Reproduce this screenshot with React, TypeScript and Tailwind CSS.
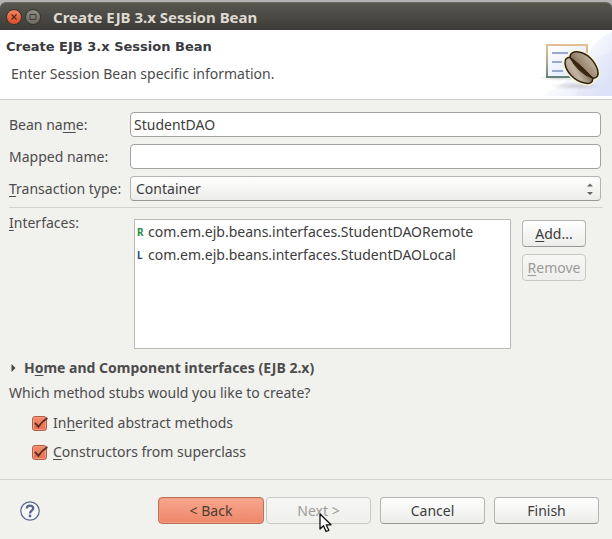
import type { ReactNode } from "react";

interface DialogButtonProps {
  children: ReactNode;
  disabled?: boolean;
  primary?: boolean;
  className?: string;
}

function DialogButton({ children, disabled, primary, className = "" }: DialogButtonProps) {
  const look = primary
    ? "border-[#b9705a] bg-linear-to-b from-[#f7a68e] to-[#ee8768] text-[#4a3b36] shadow-[inset_0_0_0_1px_#f19b81]"
    : disabled
    ? "border-[#c9c8c4] bg-linear-to-b from-[#f6f6f5] to-[#efefed] text-[#9c9b98]"
    : "border-[#b5b4b0] border-b-[#989793] bg-linear-to-b from-white to-[#ececea] text-[#3c3c3c]";

  return (
    <button
      type="button"
      disabled={disabled}
      className={`h-[27px] rounded border leading-5 whitespace-nowrap ${look} ${className}`}
    >
      {children}
    </button>
  );
}

interface StubCheckboxProps {
  id: string;
  children: ReactNode;
}

function StubCheckbox({ id, children }: StubCheckboxProps) {
  return (
    <div className="flex h-5 items-center">
      <span className="relative mr-[6px] h-[15px] w-[15px]">
        <input
          id={id}
          type="checkbox"
          defaultChecked
          className="peer block h-[15px] w-[15px] appearance-none rounded-[3px] border border-[#b35c43] bg-linear-to-b from-[#f28b6d] to-[#e86f4d] shadow-[inset_0_0_0_1px_#f49d84]"
        />
        <svg
          viewBox="0 0 17 15"
          className="pointer-events-none absolute top-0 left-0 hidden h-[15px] w-[17px] peer-checked:block"
        >
          <path d="M3 6.8 6.4 10.8Q9.4 5.8 15.4 2" fill="none" stroke="#5c3026" strokeWidth="2" />
        </svg>
      </span>
      <label htmlFor={id}>{children}</label>
    </div>
  );
}

function BeanBanner() {
  return (
    <svg viewBox="0 0 76 66" className="h-[66px] w-[76px] shrink-0" aria-hidden="true">
      <defs>
        <linearGradient id="sky" x1="0.35" y1="0.35" x2="1" y2="0.8">
          <stop offset="0" stopColor="#ffffff" />
          <stop offset="1" stopColor="#e0e5f8" />
        </linearGradient>
        <linearGradient id="frame" x1="0" y1="0" x2="0" y2="1">
          <stop offset="0" stopColor="#e2c096" />
          <stop offset="0.6" stopColor="#aaa48a" />
          <stop offset="1" stopColor="#638177" />
        </linearGradient>
        <linearGradient id="sheet" x1="0" y1="0" x2="1" y2="1">
          <stop offset="0" stopColor="#ffffff" />
          <stop offset="1" stopColor="#dce6fa" />
        </linearGradient>
        <linearGradient id="upper" x1="0.1" y1="0.7" x2="0.8" y2="0.2">
          <stop offset="0" stopColor="#6a533c" />
          <stop offset="0.5" stopColor="#a08c75" />
          <stop offset="1" stopColor="#c3b5a2" />
        </linearGradient>
        <linearGradient id="lower" x1="0.1" y1="0.7" x2="0.8" y2="0.3">
          <stop offset="0" stopColor="#a99983" />
          <stop offset="0.4" stopColor="#c2b5a1" />
          <stop offset="1" stopColor="#6e5840" />
        </linearGradient>
        <radialGradient id="shade">
          <stop offset="0" stopColor="#8f8d98" stopOpacity="0.35" />
          <stop offset="1" stopColor="#8f8d98" stopOpacity="0" />
        </radialGradient>
      </defs>
      <path d="M76 2Q64 6 56 18Q38 52 4 66H76Z" fill="url(#sky)" />
      <path d="M76 22Q62 25 50 35L40 66H76Z" fill="#cbd2f0" opacity="0.15" />
      <ellipse cx="23" cy="48" rx="22" ry="3" fill="url(#shade)" />
      <ellipse cx="40" cy="56" rx="26" ry="4" fill="url(#shade)" />
      <rect x="11" y="15" width="40" height="32" fill="url(#sheet)" stroke="url(#frame)" strokeWidth="2" />
      <path d="M16 23H32M16 32H26M16 41H27" stroke="#98a8d0" strokeWidth="2" />
      <g transform="translate(24 16) scale(0.3333)" strokeLinejoin="round">
        <path
          d="M30 34C30 20 42 16 56 18C82 22 104 44 113 72C117 88 112 96 99 97C98 110 88 115 74 111C44 106 18 78 15 52C14 40 20 34 30 34Z"
          fill="#fbf5ce"
          stroke="#fbf5ce"
          strokeWidth="13"
        />
        <path
          d="M30 34C30 20 42 16 56 18C82 22 104 44 113 72C117 88 112 96 99 97C80 84 48 62 30 34Z"
          fill="url(#upper)"
          stroke="#2e2214"
          strokeWidth="4.5"
        />
        <path
          d="M30 34C20 34 14 40 15 52C18 78 44 106 74 111C88 115 98 110 99 97C80 84 48 62 30 34Z"
          fill="url(#lower)"
          stroke="#2e2214"
          strokeWidth="4.5"
        />
        <path d="M30 34Q60 54 99 97Q54 82 30 34Z" fill="#3b2512" stroke="#3b2512" strokeWidth="3" />
      </g>
    </svg>
  );
}

const interfaces = [
  { kind: "R", color: "text-[#268a45]", name: "com.em.ejb.beans.interfaces.StudentDAORemote" },
  { kind: "L", color: "text-[#234a7d]", name: "com.em.ejb.beans.interfaces.StudentDAOLocal" },
];

const field = "h-[25px] w-full rounded border border-[#a3a29e] bg-white px-[3px] text-[#3c3c3c] outline-none";

export default function App() {
  return (
    <div className="flex min-h-screen flex-col bg-[#b3b3b1] pt-[2px] font-['Noto_Sans',sans-serif] text-sm leading-5 text-[#4c4c4c]">
      <header className="flex h-7 items-center rounded-t-md border-t border-[#6b6a63] bg-linear-to-b from-[#57564f] to-[#3d3c38] pl-[6px]">
        <button
          type="button"
          aria-label="Close"
          className="flex h-4 w-4 items-center justify-center rounded-full border border-[#33322e] bg-linear-to-b from-[#f2805d] to-[#dc4e28]"
        >
          <svg viewBox="0 0 8 8" className="h-2 w-2">
            <path d="M1.5 1.5 6.5 6.5M6.5 1.5 1.5 6.5" stroke="#51271a" strokeWidth="1.2" />
          </svg>
        </button>
        <button
          type="button"
          aria-label="Maximize"
          className="ml-[3px] flex h-4 w-4 items-center justify-center rounded-full border border-[#33322e] bg-linear-to-b from-[#908e83] to-[#6d6b62]"
        >
          <svg viewBox="0 0 8 8" className="h-2 w-2">
            <path d="M1 1.5H7V6.5H1Z" fill="none" stroke="#3d3c36" />
          </svg>
        </button>
        <span className="ml-3 text-[15px] font-bold text-[#dfdbd2]">Create EJB 3.x Session Bean</span>
      </header>

      <section className="flex h-[70px] justify-between border-b border-[#d3d2ce] bg-white">
        <div className="pt-[7px] pl-[6px]">
          <h1 className="font-['DejaVu_Sans',sans-serif] text-[13px] font-bold text-[#3a3a3e]">
            Create EJB 3.x Session Bean
          </h1>
          <p className="mt-[7px] ml-[5px]">Enter Session Bean specific information.</p>
        </div>
        <BeanBanner />
      </section>

      <main className="flex-1 bg-[#f1f1ee] px-[9px] pt-3">
        <div className="grid grid-cols-[121px_1fr] items-center gap-y-[7px] pr-[2px]">
          <label htmlFor="bean-name">
            Bean na<u className="underline-offset-2">m</u>e:
          </label>
          <input id="bean-name" defaultValue="StudentDAO" className={field} />
          <label htmlFor="mapped-name">Mapped name:</label>
          <input id="mapped-name" className={field} />
          <label htmlFor="transaction-type" className="whitespace-nowrap">
            <u className="underline-offset-2">T</u>ransaction type:
          </label>
          <div className="relative">
            <select
              id="transaction-type"
              className="block h-[25px] w-full appearance-none rounded border border-[#b5b4b0] border-b-[#989793] bg-linear-to-b from-white to-[#ececea] px-[5px] text-[#3c3c3c] outline-none"
            >
              <option>Container</option>
              <option>Bean</option>
            </select>
            <svg viewBox="0 0 6 12" className="pointer-events-none absolute top-[7px] right-2 h-3 w-[6px]">
              <path d="M0 3.5 3 .5 6 3.5ZM0 9 3 12 6 9Z" fill="#656563" />
            </svg>
          </div>
        </div>

        <hr className="mt-[6px] border-[#d3d2ce]" />

        <div className="mt-[11px] flex pr-[17px]">
          <span id="interfaces-label" className="-mt-[6px] w-[125px] shrink-0">
            <u className="underline-offset-2">I</u>nterfaces:
          </span>
          <ul
            aria-labelledby="interfaces-label"
            className="h-[130px] min-w-0 flex-1 border border-[#bbbab6] bg-white pl-[2px] text-[#3c3c3c]"
          >
            {interfaces.map((item) => (
              <li key={item.name} className="flex h-[23px] items-center whitespace-nowrap">
                <span className={`w-[11px] text-[10px] leading-[10px] font-bold ${item.color}`}>{item.kind}</span>
                {item.name}
              </li>
            ))}
          </ul>
          <div className="ml-[11px] flex w-16 flex-col gap-[7px] pt-[1px]">
            <DialogButton>
              <u className="underline-offset-2">A</u>dd...
            </DialogButton>
            <DialogButton disabled>
              <u className="underline-offset-2">R</u>emove
            </DialogButton>
          </div>
        </div>

        <button type="button" aria-expanded="false" className="mt-[9px] flex h-5 items-center font-bold">
          <svg viewBox="0 0 5 8" className="mr-2 ml-[2px] h-2 w-[5px]">
            <path d="M0.5 0 4.5 4 0.5 8Z" fill="#454545" />
          </svg>
          <span>
            H<u className="underline-offset-2">o</u>me and Component interfaces (EJB 2.x)
          </span>
        </button>
        <p className="mt-[5px]">Which method stubs would you like to create?</p>
        <div className="mt-[10px] flex flex-col gap-[9px] pl-[23px]">
          <StubCheckbox id="inherited">
            In<u className="underline-offset-2">h</u>erited abstract methods
          </StubCheckbox>
          <StubCheckbox id="constructors">
            <u className="underline-offset-2">C</u>onstructors from superclass
          </StubCheckbox>
        </div>
      </main>

      <footer className="flex h-[60px] items-center border-t border-[#d3d2ce] bg-[#f1f1ee] pt-[2px] pr-[13px] pl-5">
        <button type="button" aria-label="Help" className="mr-auto">
          <svg viewBox="0 0 20 20" className="h-5 w-5">
            <circle cx="10" cy="10" r="9.2" fill="#f8f8fb" stroke="#59658c" strokeWidth="1.2" />
            <path
              d="M6.8 7.6C6.8 3.5 13.2 3.7 13.2 7.3C13.2 9.7 10 9.7 10 12.4"
              fill="none"
              stroke="#59658c"
              strokeWidth="2.3"
            />
            <circle cx="10" cy="15" r="1.4" fill="#59658c" />
          </svg>
        </button>
        <DialogButton primary className="w-[106px]">
          &lt; Back
        </DialogButton>
        <div className="relative ml-[2px]">
          <DialogButton disabled className="w-[105px]">
            Next &gt;
          </DialogButton>
          <svg viewBox="0 0 13 20" className="pointer-events-none absolute top-4 left-[53px] h-5 w-[13px]">
            <path
              d="M1 1V16L4.5 12.8 7 18.5 9.8 17.3 7.2 11.8H12Z"
              fill="#ffffff"
              stroke="#111111"
              strokeWidth="1.3"
              strokeLinejoin="round"
            />
          </svg>
        </div>
        <DialogButton className="ml-[9px] w-[105px]">Cancel</DialogButton>
        <DialogButton className="ml-[9px] w-[105px]">Finish</DialogButton>
      </footer>
    </div>
  );
}
